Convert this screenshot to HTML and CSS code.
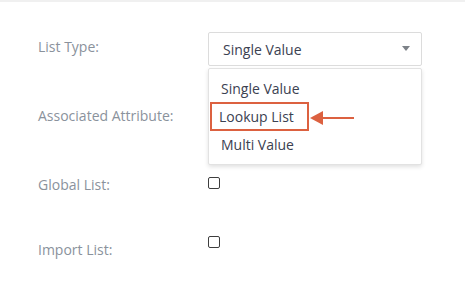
FILE: index.html
```html
<!DOCTYPE html>
<html>

<head>
  <title>List Settings</title>
  <link rel="stylesheet" href="styles.css">
</head>

<body>
  <div class="top-bar"></div>

  <div class="form">
    <div class="form-row row-type">
      <label class="form-label">List Type:</label>
      <div class="form-control">
        <div class="select">
          <span class="select-value">Single Value</span>
          <span class="select-caret"></span>
        </div>

        <!-- open dropdown -->
        <ul class="dropdown">
          <li class="dropdown-item">Single Value</li>
          <li class="dropdown-item highlighted">Lookup List</li>
          <li class="dropdown-item">Multi Value</li>
        </ul>

        <svg class="callout-arrow" width="44" height="16" viewBox="0 0 44 16">
          <path d="M0 8 L13 1 L13 15 Z" fill="#dc6140" />
          <rect x="12" y="7" width="32" height="2" fill="#dc6140" />
        </svg>
      </div>
    </div>

    <div class="form-row row-attr">
      <label class="form-label">Associated Attribute:</label>
      <div class="form-control"></div>
    </div>

    <div class="form-row row-global">
      <label class="form-label">Global List:</label>
      <div class="form-control">
        <span class="checkbox"></span>
      </div>
    </div>

    <div class="form-row row-import">
      <label class="form-label">Import List:</label>
      <div class="form-control">
        <span class="checkbox"></span>
      </div>
    </div>
  </div>
</body>

</html>
```

FILE: styles.css
```css
body {
  margin: 0;
  font-family: 'Open Sans', 'Noto Sans', sans-serif;
  font-size: 14px;
  color: #3b4151;
  background-color: #fff;
}

.top-bar {
  height: 2px;
  background-color: #f0f0f0;
}

.form {
  padding-left: 38px;
}

.form-row {
  display: grid;
  grid-template-columns: 170px 214px;
}

.form-label {
  color: #8a929c;
  line-height: 20px;
}

.form-control {
  position: relative;
}

.row-type {
  margin-top: 30px;
}

.row-type .form-label {
  padding-top: 5px;
}

.row-attr {
  margin-top: 40px;
}

.row-global {
  margin-top: 49px;
}

.row-import {
  margin-top: 41px;
}

.row-import .form-label {
  padding-top: 4px;
}

.row-import .checkbox {
  margin-top: 0;
}

/* Select box */
.select {
  height: 32px;
  border: 1px solid #dcdcdc;
  border-radius: 2px;
  display: flex;
  align-items: center;
  justify-content: space-between;
  padding: 0 11px 0 14px;
  line-height: 20px;
}

.select-value {
  padding-top: 1px;
}

.select-caret {
  width: 0;
  height: 0;
  border-left: 4px solid transparent;
  border-right: 4px solid transparent;
  border-top: 5px solid #7d8288;
  margin-top: -2px;
}

/* Dropdown */
.dropdown {
  position: absolute;
  top: 36px;
  left: 0;
  width: 212px;
  margin: 0;
  padding: 6px 0 5px;
  list-style: none;
  background-color: #fff;
  border: 1px solid #e2e2e2;
  border-radius: 2px;
  box-shadow: 0 2px 4px rgba(0, 0, 0, 0.12);
  z-index: 2;
}

.dropdown-item {
  height: 28px;
  line-height: 28px;
  padding-left: 12px;
}

.dropdown-item.highlighted {
  margin: -1px 0 0 1px;
  width: 88px;
  height: 25px;
  line-height: 25px;
  padding-left: 7px;
  border: 2px solid #dc6140;
}

.callout-arrow {
  position: absolute;
  left: 102px;
  top: 78px;
  z-index: 3;
}

/* Checkbox */
.checkbox {
  display: block;
  width: 10px;
  height: 10px;
  border: 1px solid #3e3e3e;
  border-radius: 2px;
  margin-top: 2px;
}
```
